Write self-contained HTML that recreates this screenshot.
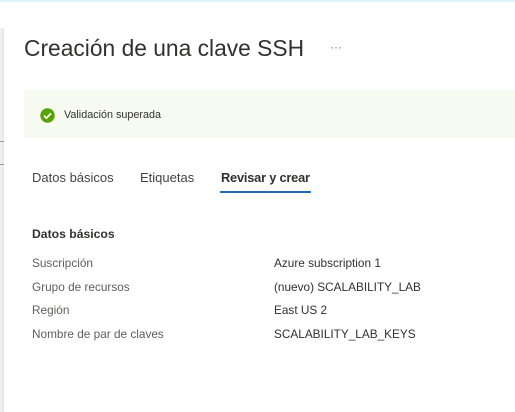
<!DOCTYPE html>
<html><head><meta charset="utf-8"><style>
body{margin:0;width:515px;height:412px;background:#fff;font-family:"Liberation Sans",sans-serif;position:relative;overflow:hidden;color:#323130}
.a{position:absolute;white-space:nowrap}
</style></head><body>
<div class="a" style="left:0;top:0;width:515px;height:2px;background:#dff6fb"></div>
<div class="a" style="left:0;top:28px;width:4px;height:384px;background:linear-gradient(90deg,#f2f2f2,#e6e6e6)"></div>
<div class="a" style="left:0;top:141px;width:4px;height:1px;background:#999"></div>
<div class="a" style="left:0;top:164px;width:4px;height:1px;background:#999"></div>
<div class="a" style="left:24px;top:35px;font-size:22.8px;color:#323130">Creación de una clave SSH</div>
<div class="a" style="left:330px;top:40px;font-size:12px;color:#777">···</div>
<div class="a" style="left:24px;top:90px;width:491px;height:48px;background:#f8fbf1"></div>
<svg class="a" style="left:40px;top:108px" width="15" height="15" viewBox="0 0 15 15"><circle cx="7.5" cy="7.5" r="7.2" fill="#57a300"/><path d="M4 7.7l2.4 2.4 4.6-4.7" stroke="#fff" stroke-width="1.8" fill="none"/></svg>
<div class="a" style="left:64px;top:109px;font-size:10.8px;color:#323130">Validación superada</div>
<div class="a" style="left:32px;top:170px;font-size:13px;color:#444">Datos básicos</div>
<div class="a" style="left:140px;top:170px;font-size:13px;color:#444">Etiquetas</div>
<div class="a" style="left:221px;top:170px;font-size:12.8px;color:#323130;font-weight:bold;letter-spacing:-0.2px">Revisar y crear</div>
<div class="a" style="left:220px;top:191px;width:91px;height:2px;background:#1f6db5"></div>
<div class="a" style="left:32px;top:227px;font-size:12.2px;font-weight:bold;color:#323130">Datos básicos</div>
<div class="a" style="left:32px;top:252px;font-size:11.8px;color:#605e5c;line-height:23.7px">Suscripción<br>Grupo de recursos<br>Región<br>Nombre de par de claves</div>
<div class="a" style="left:274px;top:252px;font-size:11.8px;color:#323130;line-height:23.7px">Azure subscription 1<br>(nuevo) SCALABILITY_LAB<br>East US 2<br>SCALABILITY_LAB_KEYS</div>
</body></html>
